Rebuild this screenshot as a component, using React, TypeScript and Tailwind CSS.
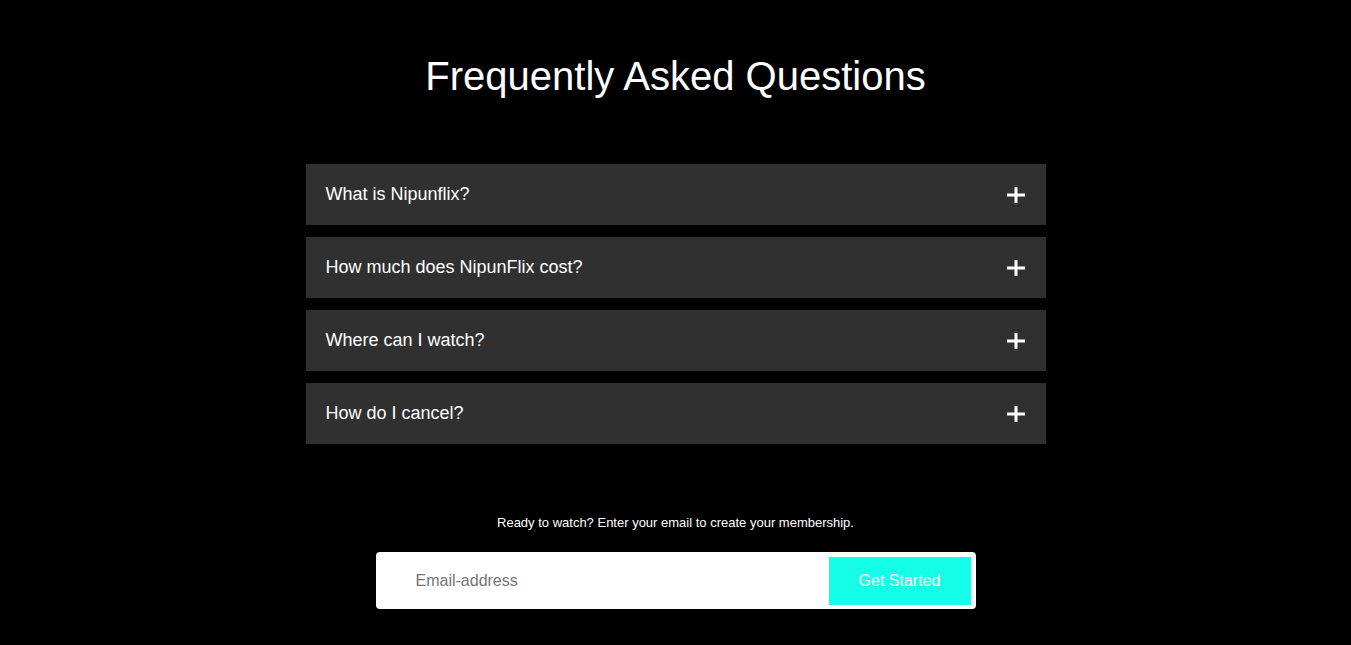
const questions = [
  "What is Nipunflix?",
  "How much does NipunFlix cost?",
  "Where can I watch?",
  "How do I cancel?",
];

function PlusIcon() {
  return (
    <svg width="18" height="16" viewBox="0 0 18 16" className="shrink-0">
      <path d="M0 8H18M9 0V16" stroke="#fff" strokeWidth="3" />
    </svg>
  );
}

export default function App() {
  return (
    <div className="min-h-screen bg-black text-white font-['Liberation_Sans',Arial,sans-serif]">
      {/* FAQ */}
      <h1 className="pt-[53px] text-center text-[40px] leading-[46px] font-normal">
        Frequently Asked Questions
      </h1>
      <div className="mx-auto mt-[65px] flex w-[740px] flex-col gap-3">
        {questions.map((q) => (
          <button
            key={q}
            className="flex h-[61px] w-full items-center justify-between bg-[#303030] pl-5 pr-[21px] text-left text-[18px]"
          >
            <span>{q}</span>
            <PlusIcon />
          </button>
        ))}
      </div>

      {/* Email signup */}
      <p className="mt-[71px] text-center text-[13px] leading-[15px]">
        Ready to watch? Enter your email to create your membership.
      </p>
      <form className="mx-auto mt-[22px] flex h-[57px] w-[600px] items-center rounded-[4px] bg-white pl-10 pr-[5px]">
        <input
          type="email"
          placeholder="Email-address"
          className="h-full flex-1 bg-transparent text-[16px] text-black outline-none placeholder:text-[#757575]"
        />
        <button
          type="button"
          className="h-[48px] w-[142px] bg-[#15fee8] text-[16px] text-white"
        >
          Get Started
        </button>
      </form>
    </div>
  );
}
